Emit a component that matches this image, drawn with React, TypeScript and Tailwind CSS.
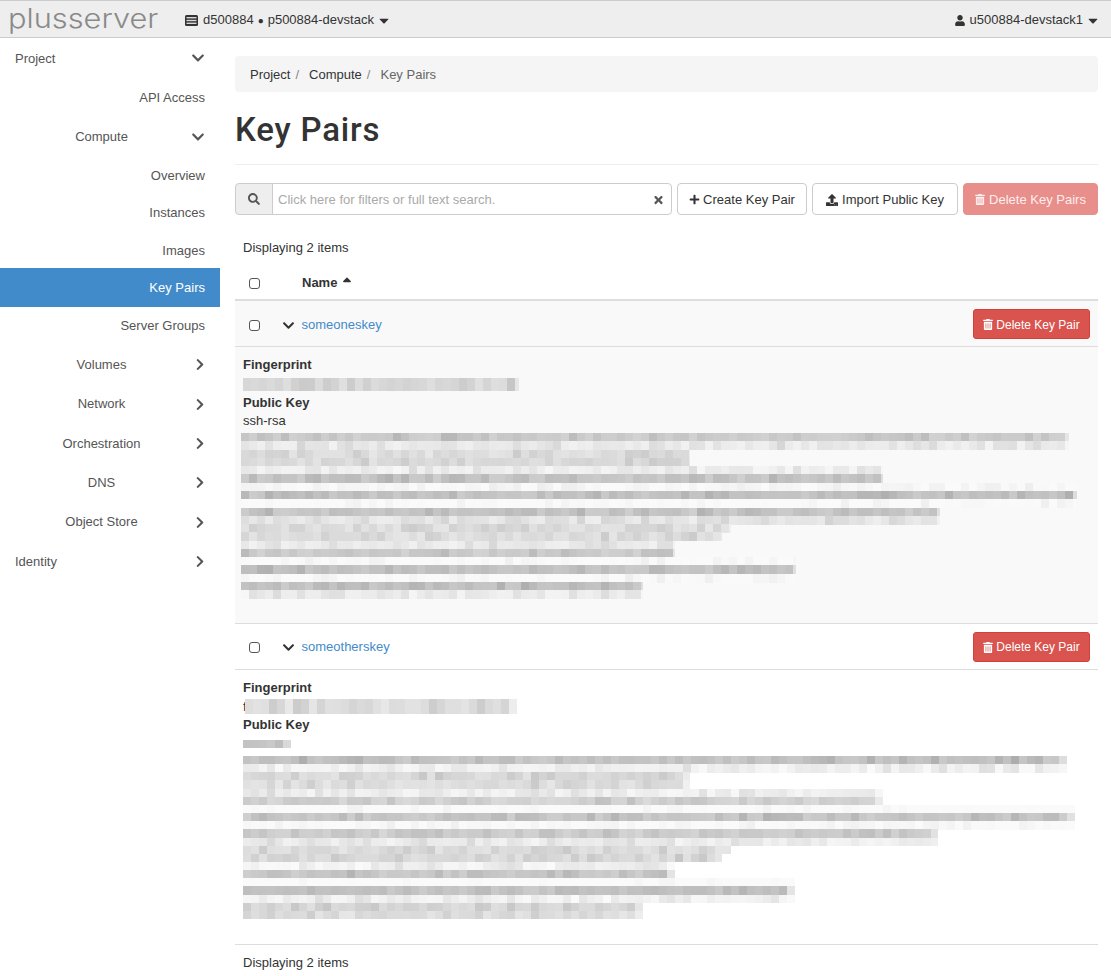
import React from 'react';
import {
  FaCaretDown,
  FaChevronDown,
  FaChevronRight,
  FaPlus,
  FaSearch,
  FaSortUp,
  FaTimes,
  FaTrashAlt,
  FaUpload,
  FaUser,
} from 'react-icons/fa';

type MosaicRow = { end: number; shade: number };

const makeRows = (ends: number[], shades: number[]): MosaicRow[] =>
  ends.map((end, i) => ({ end, shade: shades[i] }));

const ENDS_ONE = [1069, 1069, 690, 690, 883, 883, 1077, 1077, 1077, 940, 940, 731, 722, 675, 675, 796, 796, 796, 643, 643];
const SHADES_ONE = [200, 232, 220, 216, 236, 196, 244, 192, 248, 196, 228, 220, 220, 232, 200, 246, 192, 246, 192, 236];
const ENDS_TWO = [1067, 1067, 690, 690, 883, 883, 1075, 1075, 1075, 938, 938, 731, 722, 675, 675, 795, 795, 795, 643, 643];
const SHADES_TWO = [192, 240, 216, 220, 236, 208, 250, 196, 246, 204, 234, 220, 216, 240, 196, 251, 192, 240, 212, 220];

// small deterministic noise so the blur blocks look the same on every load
const noise = (a: number, b: number) => {
  const n = Math.sin(a * 12.9898 + b * 78.233) * 43758.5453;
  return n - Math.floor(n);
};

const Mosaic = ({
  rows,
  left,
  rowHeight,
  seed,
}: {
  rows: MosaicRow[];
  left: number;
  rowHeight: number;
  seed: number;
}) => {
  const width = Math.max(...rows.map((r) => r.end)) - left;
  const height = rows.length * rowHeight;
  return (
    <svg width={width} height={height} className="block relative" shapeRendering="crispEdges">
      {rows.map((row, y) => {
        const total = row.end - left;
        const cells = Math.ceil(total / 8);
        return Array.from({ length: cells }, (_, x) => {
          const dark = Math.pow(noise(x + seed, y), 2.4) * 26;
          const spread = (noise(y + seed, x) - 0.5) * 13;
          let v = Math.round(row.shade + spread - dark * (row.shade > 240 ? 0.3 : 0.7) + 5);
          if (x === cells - 1) v = Math.round(v + (250 - v) * 0.55);
          v = Math.min(250, Math.max(165, v));
          return (
            <rect
              key={x}
              x={x * 8}
              y={y * rowHeight}
              width={Math.min(8, total - x * 8)}
              height={rowHeight + 0.5}
              fill={`rgb(${v},${v},${v})`}
            />
          );
        });
      })}
    </svg>
  );
};

const ProjectIcon = () => (
  <svg width="13" height="11" viewBox="0 0 13 11" className="shrink-0">
    <rect x="0" y="0" width="13" height="11" rx="1.5" fill="#333" />
    <rect x="1.5" y="2" width="10" height="1.4" fill="#d8d8d8" />
    <rect x="1.5" y="4.8" width="10" height="1.4" fill="#d8d8d8" />
    <rect x="1.5" y="7.6" width="10" height="1.4" fill="#d8d8d8" />
  </svg>
);

const Checkbox = () => (
  <span className="block w-[11px] h-[11px] rounded-[3px] border border-[#555] bg-white" />
);

const Chevron = ({ open }: { open?: boolean }) =>
  open ? (
    <FaChevronDown className="w-[14px] h-[14px] text-[#555]" />
  ) : (
    <FaChevronRight className="w-[14px] h-[13px] text-[#555] translate-x-[2px]" />
  );

const TopRow = ({ label, open, h }: { label: string; open?: boolean; h: string }) => (
  <div className={`flex items-center pl-[15px] pr-[15px] ${h}`}>
    <span className="flex-1 pt-px">{label}</span>
    <Chevron open={open} />
  </div>
);

const GroupRow = ({ label, open }: { label: string; open?: boolean }) => (
  <div className="flex items-center pl-[15px] pr-[15px] h-[39.3px]">
    <span className="flex-1 text-center pr-[3px]">{label}</span>
    <Chevron open={open} />
  </div>
);

const LeafRow = ({ label, active, h }: { label: string; active?: boolean; h: string }) => (
  <div className={`flex items-center justify-end pr-[15px] ${h} ${active ? 'bg-[#428bca] text-white' : ''}`}>
    {label}
  </div>
);

const Sidebar = () => (
  <aside className="w-[220px] shrink-0 text-[#555]">
    <TopRow label="Project" open h="h-[40px]" />
    <LeafRow label="API Access" h="h-[39px]" />
    <GroupRow label="Compute" open />
    <LeafRow label="Overview" h="h-[37.5px] pt-px" />
    <LeafRow label="Instances" h="h-[37.2px]" />
    <LeafRow label="Images" h="h-[37.3px] pt-[2px]" />
    <LeafRow label="Key Pairs" active h="h-[39px]" />
    <LeafRow label="Server Groups" h="h-[37px] mb-px" />
    <GroupRow label="Volumes" />
    <GroupRow label="Network" />
    <GroupRow label="Orchestration" />
    <GroupRow label="DNS" />
    <GroupRow label="Object Store" />
    <TopRow label="Identity" h="h-[39.3px]" />
  </aside>
);

const DeleteRowButton = () => (
  <button className="flex items-center justify-center gap-[3px] w-[117px] h-[30px] pt-px rounded-[3px] bg-[#d9534f] border border-[#d43f3a] text-white text-[12px]">
    <FaTrashAlt className="w-[10px] h-[11px]" />
    Delete Key Pair
  </button>
);

const KeyRow = ({ name, shaded }: { name: string; shaded?: boolean }) => (
  <div className={`flex items-center h-[46px] pt-px border-b border-[#ddd] pr-[8px] ${shaded ? 'bg-[#f9f9f9]' : ''}`}>
    <div className="w-[47px] pl-[14px] pt-[2px]">
      <Checkbox />
    </div>
    <FaChevronDown className="w-[13px] h-[13px] mt-[2px] text-[#333]" />
    <a className="ml-[6.5px] pt-px text-[#428bca]">{name}</a>
    <div className="flex-1" />
    <DeleteRowButton />
  </div>
);

const Label = ({ children, className = '' }: { children: string; className?: string }) => (
  <div className={`font-bold leading-[18px] text-[#333] ${className}`}>{children}</div>
);

export default function App() {
  return (
    <div className="min-h-screen bg-white text-[13px] text-[#333] font-['Liberation_Sans',Arial,sans-serif]">
      <header className="flex items-center h-[38px] pt-[2px] bg-[#eeeeee] border-t border-t-[#ccc] border-b border-b-[#ccc] pl-[10px] pr-[13px]">
        <span className="w-[175px] -ml-[2px] mr-[2px] -mt-[2px] font-['Inter',sans-serif] font-light text-[27px] leading-[30px] text-[#8a8a8a] scale-x-[1.14] origin-left">
          plusserver
        </span>
        <ProjectIcon />
        <span className="ml-[5px]">d500884</span>
        <span className="mx-[4px] text-[10px]">●</span>
        <span>p500884-devstack</span>
        <FaCaretDown className="ml-[5px] w-[10px] h-[15px]" />
        <div className="flex-1" />
        <FaUser className="w-[10px] h-[11px]" />
        <span className="ml-[5px]">u500884-devstack1</span>
        <FaCaretDown className="ml-[5px] w-[10px] h-[15px]" />
      </header>

      <div className="flex">
        <Sidebar />
        <main className="ml-[15px] w-[863px]">
          <nav className="flex items-center h-[36px] mt-[18px] pl-[15px] pt-px bg-[#f5f5f5] rounded-[4px]">
            <span>Project</span>
            <span className="ml-[5px] mr-[10px] text-[#888]">/</span>
            <span>Compute</span>
            <span className="ml-[5px] mr-[10px] text-[#888]">/</span>
            <span className="text-[#666]">Key Pairs</span>
          </nav>

          <h1 className="mt-[20px] h-[52px] font-['Roboto',sans-serif] text-[33px] leading-[36px] tracking-[0.8px] font-medium text-[#333]">
            Key Pairs
          </h1>
          <div className="border-b border-[#eee]" />

          <div className="flex mt-[18px] h-[32px]">
            <div className="flex w-[437px]">
              <div className="flex items-center justify-center w-[38px] bg-[#eee] border border-[#ccc] rounded-l-[4px]">
                <FaSearch className="w-[12px] h-[12px] text-[#555]" />
              </div>
              <div className="flex flex-1 items-center -ml-px pl-[5px] pr-[7px] pt-px border border-[#ccc] rounded-r-[4px] bg-white text-[#aaa]">
                <span className="flex-1">Click here for filters or full text search.</span>
                <FaTimes className="w-[11px] h-[12px] text-[#555]" />
              </div>
            </div>
            <button className="flex items-center justify-center gap-[3px] ml-[5px] w-[130px] pt-px border border-[#ccc] rounded-[4px] bg-white">
              <FaPlus className="w-[11px] h-[11px]" />
              Create Key Pair
            </button>
            <button className="flex items-center justify-center gap-[4px] ml-[5px] w-[146px] pt-px border border-[#ccc] rounded-[4px] bg-white">
              <FaUpload className="w-[12px] h-[12px]" />
              Import Public Key
            </button>
            <button className="flex items-center justify-center gap-[4px] ml-[5px] w-[135px] pt-px border border-[#e6908c] rounded-[4px] bg-[#e88e8b] text-[#fdeeee]">
              <FaTrashAlt className="w-[10px] h-[11px]" />
              Delete Key Pairs
            </button>
          </div>

          <div className="pl-[8px] mt-[24px] leading-[18px]">Displaying 2 items</div>

          <div className="flex items-center h-[34px] mt-[10px] border-b-2 border-[#ddd] font-bold">
            <div className="w-[67px] pl-[14px] pt-px">
              <Checkbox />
            </div>
            Name
            <FaSortUp className="ml-[5px] w-[10px] h-[14px]" />
          </div>

          <KeyRow name="someoneskey" shaded />
          <div className="bg-[#f9f9f9] border-b border-[#ddd] pb-[24px]">
            <div className="pl-[8px] pt-[9px]">
              <Label>Fingerprint</Label>
              <div className="mt-[4px]">
                <Mosaic rows={[{ end: 519, shade: 214 }]} left={243} rowHeight={13} seed={3} />
              </div>
              <Label className="mt-[3px]">Public Key</Label>
              <div className="leading-[18px]">ssh-rsa</div>
            </div>
            <div className="pl-[6px] mt-[3px]">
              <Mosaic rows={makeRows(ENDS_ONE, SHADES_ONE)} left={241} rowHeight={8.28} seed={11} />
            </div>
          </div>

          <KeyRow name="someotherskey" />
          <div className="border-b border-[#ddd] pb-[25px]">
            <div className="pl-[8px] pt-[9px]">
              <Label>Fingerprint</Label>
              <div className="flex mt-[2px]">
                <span className="mr-[-2px] leading-[15px]">f</span>
                <Mosaic rows={[{ end: 517, shade: 222 }]} left={245} rowHeight={15} seed={7} />
              </div>
              <Label className="mt-[2px]">Public Key</Label>
              <div className="mt-[6px]">
                <Mosaic rows={[{ end: 291, shade: 192 }]} left={243} rowHeight={8} seed={5} />
              </div>
            </div>
            <div className="pl-[8px] mt-[8px]">
              <Mosaic rows={makeRows(ENDS_TWO, SHADES_TWO)} left={243} rowHeight={8.15} seed={23} />
            </div>
          </div>

          <div className="pl-[8px] pt-[9px] leading-[18px]">Displaying 2 items</div>
        </main>
      </div>
    </div>
  );
}
